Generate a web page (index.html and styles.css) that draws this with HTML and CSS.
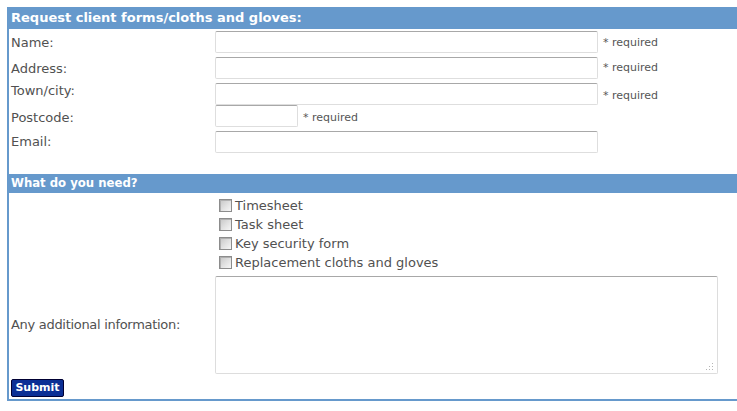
FILE: index.html
```html
<!DOCTYPE html>
<html>
<head>
<meta charset="utf-8">
<link rel="stylesheet" href="styles.css">
</head>
<body>
<form class="panel">
  <div class="hdr">Request client forms/cloths and gloves:</div>
  <div class="row r1"><label class="lbl">Name:</label><input class="txt" type="text"><span class="req">* required</span></div>
  <div class="row r2"><label class="lbl">Address:</label><input class="txt" type="text"><span class="req">* required</span></div>
  <div class="row r3"><label class="lbl">Town/city:</label><input class="txt" type="text"><span class="req">* required</span></div>
  <div class="row r4"><label class="lbl">Postcode:</label><input class="txt short" type="text"><span class="req">* required</span></div>
  <div class="row r5"><label class="lbl">Email:</label><input class="txt" type="text"><span class="req"></span></div>

  <div class="hdr hdr2">What do you need?</div>
  <div class="need">
    <div class="spacer"></div>
    <div class="checks">
      <label class="chk"><input type="checkbox" class="box">Timesheet</label>
      <label class="chk"><input type="checkbox" class="box">Task sheet</label>
      <label class="chk"><input type="checkbox" class="box">Key security form</label>
      <label class="chk"><input type="checkbox" class="box">Replacement cloths and gloves</label>
    </div>
  </div>
  <div class="extra">
    <label class="lbl lbl-long">Any additional information:</label>
    <div class="areawrap">
      <textarea class="area"></textarea>
      <svg class="grip" width="8" height="8" viewBox="0 0 8 8"><g fill="#b5b5b5"><rect x="6" y="0" width="1" height="1"/><rect x="6" y="3" width="1" height="1"/><rect x="3" y="3" width="1" height="1"/><rect x="6" y="6" width="1" height="1"/><rect x="3" y="6" width="1" height="1"/><rect x="0" y="6" width="1" height="1"/></g></svg>
    </div>
  </div>
  <div class="actions"><button type="button" class="submit">Submit</button></div>
</form>
</body>
</html>
```
FILE: styles.css
```css
html, body {
  margin: 0;
  padding: 0;
  background: #ffffff;
}
body {
  font-family: "DejaVu Sans", Verdana, sans-serif;
  font-size: 13px;
  color: #515151;
}
.panel {
  margin: 7px 0 0 7px;
  border-left: 2px solid #6699cc;
  border-bottom: 2px solid #6699cc;
  padding-bottom: 2px;
}
.hdr {
  background: #6699cc;
  color: #ffffff;
  font-weight: bold;
  font-size: 13px;
  height: 22px;
  line-height: 22px;
  padding-left: 2px;
  white-space: nowrap;
}
.hdr2 {
  height: 19px;
  line-height: 19px;
  margin-top: 19px;
  font-size: 11.7px;
}
.row {
  display: grid;
  grid-template-columns: 206px auto 1fr;
  align-items: start;
  height: var(--h);
}
.row .lbl {
  padding-top: var(--lp);
}
.row .txt {
  margin-top: var(--ip);
}
.row .req {
  padding-top: var(--rp);
}
.r1 { --h: 26px; --lp: 6px; --ip: 2px; --rp: 7px; }
.r2 { --h: 26px; --lp: 6px; --ip: 2px; --rp: 6px; }
.r3 { --h: 23px; --lp: 2px; --ip: 2px; --rp: 8px; }
.r4 { --h: 25px; --lp: 6px; --ip: 1px; --rp: 7px; }
.r5 { --h: 26px; --lp: 5px; --ip: 2px; --rp: 6px; }
.lbl {
  display: block;
  padding-left: 2px;
  line-height: 16px;
  font-size: 13px;
  white-space: nowrap;
}
.lbl-long {
  letter-spacing: -0.3px;
}
.txt {
  box-sizing: border-box;
  width: 383px;
  height: 22px;
  margin: 0;
  padding: 0 3px;
  border: 1px solid #dedede;
  border-top-color: #a8a8a8;
  border-radius: 2px;
  background: #ffffff;
  font-family: inherit;
  outline: none;
}
.txt.short {
  width: 83px;
}
.req {
  padding-left: 5px;
  font-size: 11px;
  line-height: 14px;
  color: #555555;
  white-space: nowrap;
}
.need {
  display: grid;
  grid-template-columns: 206px 1fr;
  padding-top: 3px;
}
.checks {
  display: flex;
  flex-direction: column;
}
.chk {
  display: flex;
  align-items: center;
  height: 19px;
  font-size: 13px;
  white-space: nowrap;
}
.box {
  -webkit-appearance: none;
  appearance: none;
  box-sizing: border-box;
  width: 13px;
  height: 13px;
  margin: 0 3px 0 4px;
  border: 1px solid #8c8c8c;
  background: linear-gradient(135deg, #c6c6c6 0%, #e2e2e2 55%, #f6f6f6 100%);
  box-shadow: inset 1px 1px 0 #b0b0b0;
}
.extra {
  display: grid;
  grid-template-columns: 206px 1fr;
  align-items: center;
  margin-top: 4px;
}
.areawrap {
  position: relative;
  width: 503px;
  height: 98px;
}
.area {
  display: block;
  box-sizing: border-box;
  width: 503px;
  height: 98px;
  margin: 0;
  border: 1px solid #dddddd;
  border-top-color: #a8a8a8;
  border-radius: 2px;
  resize: none;
  background: #ffffff;
  outline: none;
}
.grip {
  position: absolute;
  right: 4px;
  bottom: 3px;
}
.actions {
  padding: 5px 0 0 2px;
}
.submit {
  display: block;
  box-sizing: border-box;
  width: 53px;
  height: 18px;
  padding: 0;
  border: 1px solid #000033;
  border-radius: 2px;
  background: #0b2f95;
  color: #ffffff;
  font-family: "DejaVu Sans", Verdana, sans-serif;
  font-weight: bold;
  font-size: 11px;
  line-height: 16px;
}
```
